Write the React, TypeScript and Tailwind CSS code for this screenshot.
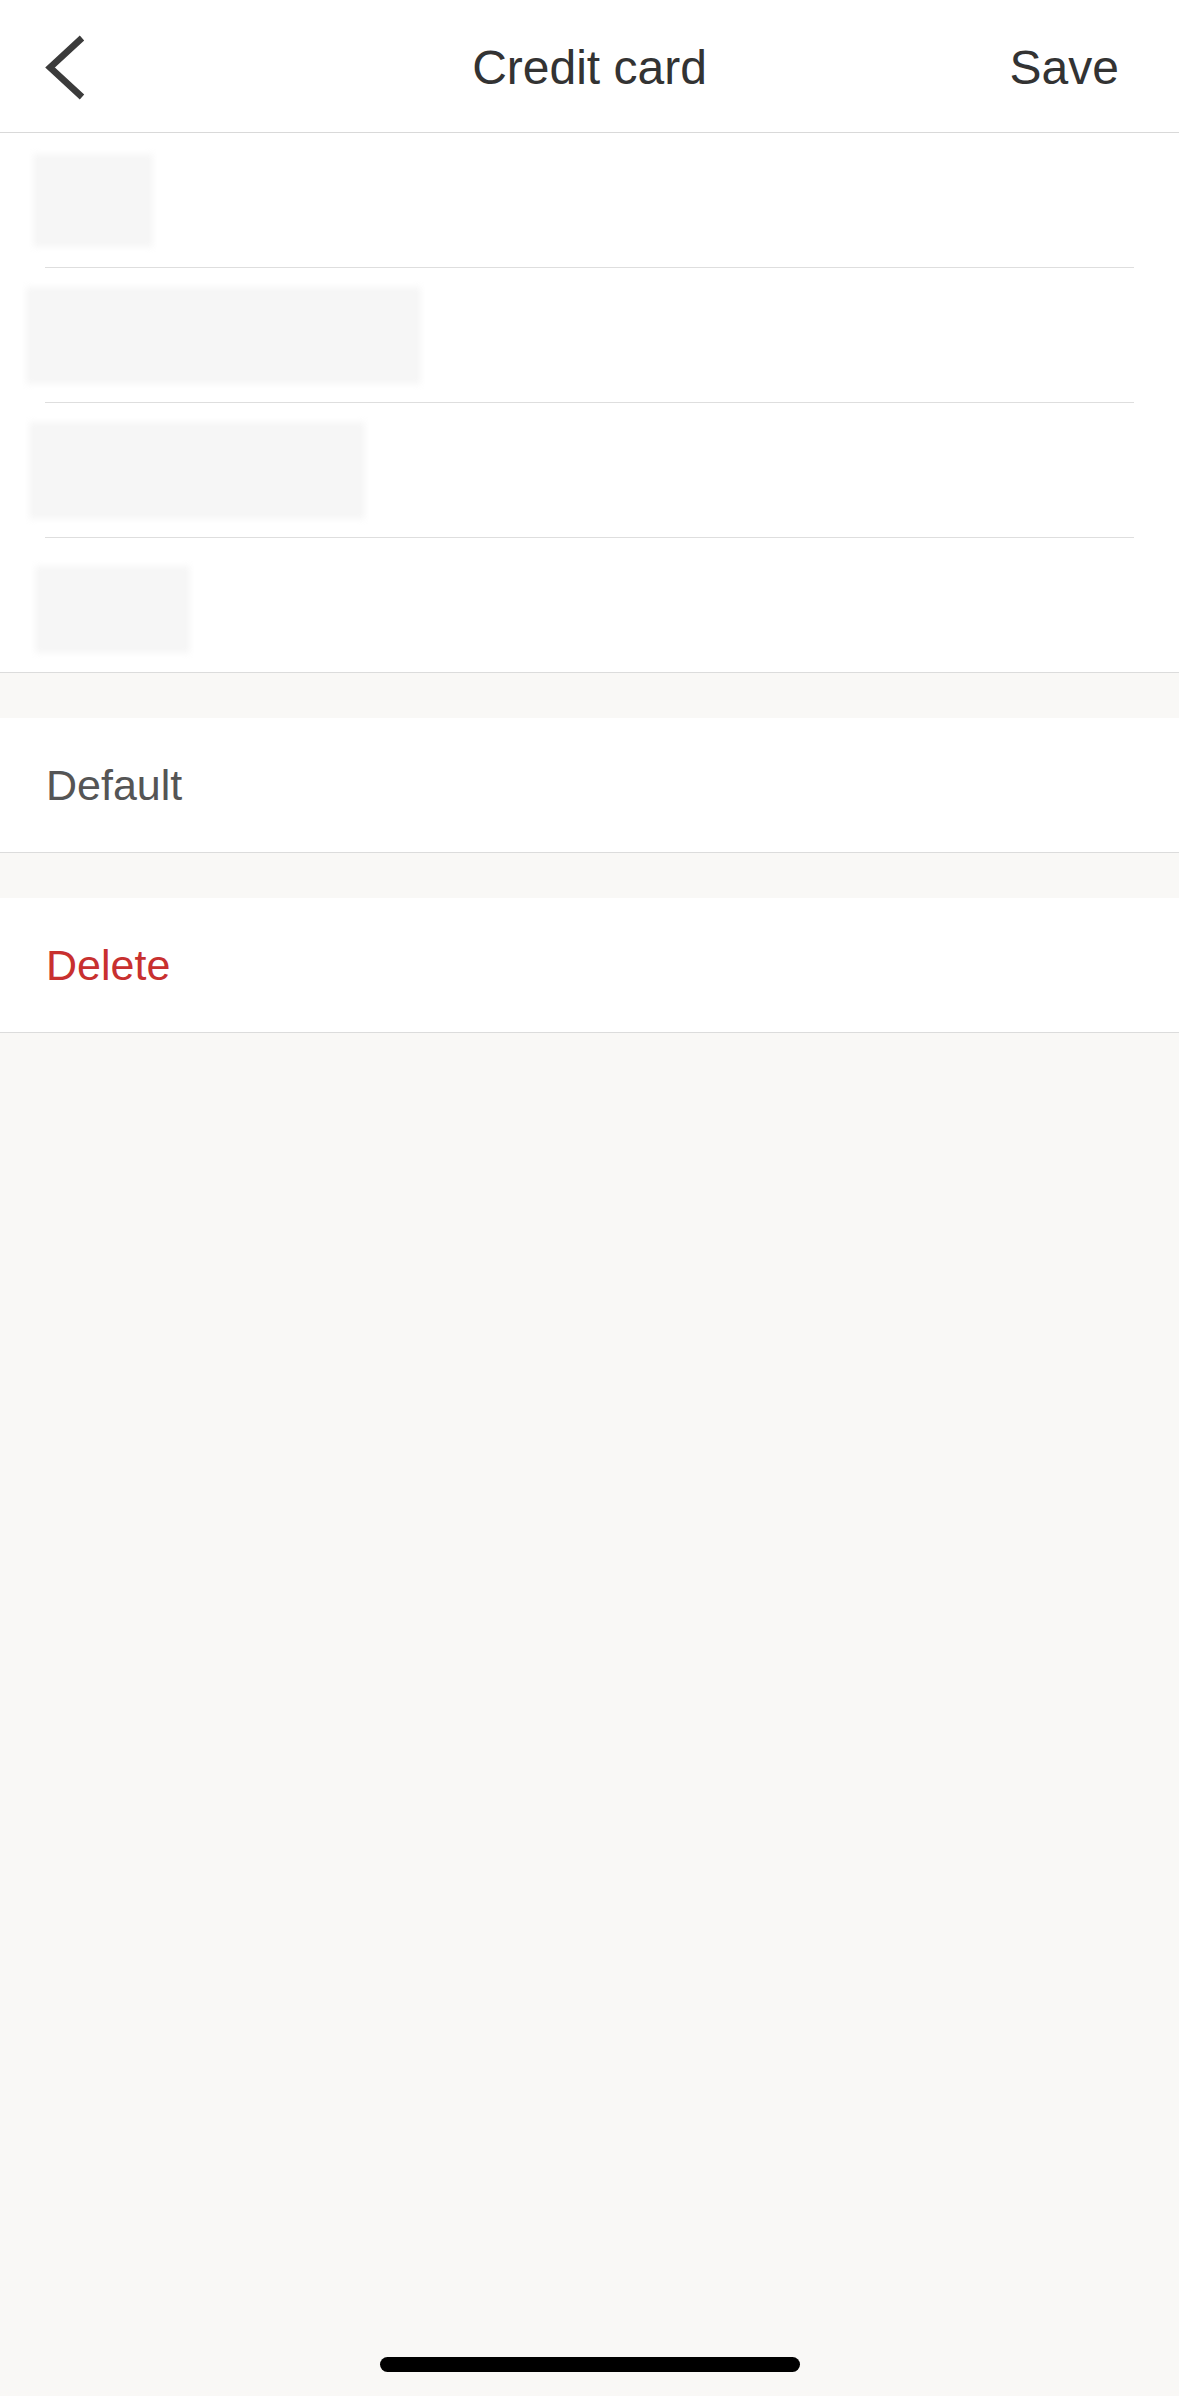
import React from 'react';

const font = { fontFamily: '"Liberation Sans", Arial, sans-serif' };

const BlurBlock: React.FC<{ className: string }> = ({ className }) => (
  <div className={`bg-[#f6f6f6] blur-[3px] ${className}`} />
);

const Separator = () => <div className="mx-[45px] h-px bg-[#dedede]" />;

const App: React.FC = () => {
  return (
    <div className="flex h-[2396px] w-full flex-col bg-[#f9f8f6]" style={font}>
      {/* Nav bar */}
      <div className="grid h-[133px] grid-cols-[1fr_auto_1fr] items-center border-b border-[#d9d9d9] bg-white">
        <div className="pl-[42px]">
          <svg width="44" height="68" viewBox="0 0 44 68" fill="none">
            <path d="M40 6 L8 35.5 L40 65" stroke="#3b3b3b" strokeWidth="6.5" strokeLinejoin="miter" />
          </svg>
        </div>
        <div className="pt-[4px] text-[48px] leading-none text-[#333333]">Credit card</div>
        <div className="pr-[60px] pt-[4px] text-right text-[48px] leading-none text-[#333333]">Save</div>
      </div>

      {/* Card fields (redacted) */}
      <div className="border-b border-[#dcdcdc] bg-white">
        <div className="flex h-[134px] items-center pl-[33px]">
          <BlurBlock className="h-[93px] w-[120px]" />
        </div>
        <Separator />
        <div className="flex h-[134px] items-center pl-[26px]">
          <BlurBlock className="h-[97px] w-[395px]" />
        </div>
        <Separator />
        <div className="flex h-[134px] items-center pl-[29px]">
          <BlurBlock className="h-[97px] w-[336px]" />
        </div>
        <Separator />
        <div className="flex h-[134px] items-center pl-[35px] pt-[8px]">
          <BlurBlock className="h-[87px] w-[155px]" />
        </div>
      </div>

      <div className="h-[45px]" />

      <div className="flex h-[135px] items-center border-b border-[#dcdcdc] bg-white pl-[46px]">
        <span className="text-[43px] leading-none text-[#555555]">Default</span>
      </div>

      <div className="h-[45px]" />

      <div className="flex h-[135px] items-center border-b border-[#dcdcdc] bg-white pl-[46px]">
        <span className="text-[43px] leading-none text-[#c8302f]">Delete</span>
      </div>

      {/* Home indicator */}
      <div className="flex flex-1 flex-col items-center justify-end pb-[24px]">
        <div className="h-[15px] w-[420px] rounded-full bg-black" />
      </div>
    </div>
  );
};

export default App;
